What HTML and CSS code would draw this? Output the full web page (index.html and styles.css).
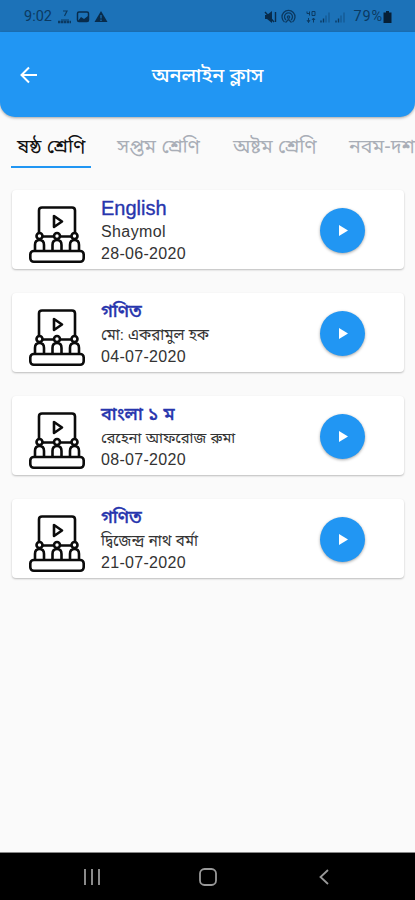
FILE: index.html
```html
<!DOCTYPE html>
<html lang="bn">
<head>
<meta charset="utf-8">
<title>অনলাইন ক্লাস</title>
<link rel="stylesheet" href="styles.css">
</head>
<body>
<svg width="0" height="0" class="defs">
  <symbol id="lesson" viewBox="0 0 56 58">
    <g fill="none" stroke="#0b0b0b" stroke-width="2.600" stroke-linejoin="round">
      <path d="M10 27V4.500q0-3 3-3H43q3 0 3 3V27M14 30.500h10M32 30.500h10"/>
      <path d="M25 10v11l8-5.500z"/>
      <circle cx="10.500" cy="30" r="3"/><circle cx="28" cy="30" r="3"/><circle cx="45.500" cy="30" r="3"/>
      <path d="M6 44v-5q0-5 4.500-5t4.500 5v5M23.500 44v-5q0-5 4.500-5t4.500 5v5M41 44v-5q0-5 4.500-5t4.500 5v5"/>
      <rect x="1.300" y="45" width="53.400" height="10.800" rx="3.500"/>
    </g>
  </symbol>
</svg>
<div class="screen">
  <div class="status">
    <span class="time">9:02</span>
    <svg class="left-icons" width="52" height="16" viewBox="0 0 52 16">
      <path d="M6 2h4l-2.500 5M4 11h8" fill="none" stroke="#0b3a62" stroke-width="1.200"/>
      <path d="M1 13h13" stroke="#0b3a62" stroke-width="2.500" stroke-dasharray="2.500 .5"/>
      <rect x="20.500" y="3" width="11" height="9.500" rx="1.500" fill="none" stroke="#082c4c" stroke-width="1.500"/>
      <path d="M21 12l3-4 3 2 4-3v5z" fill="#082c4c"/>
      <path d="M44 2l6.500 11h-13z" fill="#082c4c"/><path d="M44 6v3.500M44 10.500v1.500" stroke="#1c72b8" stroke-width="1.200"/>
    </svg>
    <svg class="right-icons" width="88" height="16" viewBox="0 0 88 16">
      <path d="M1 6h2l5-4v12L3 10H1z" fill="#082c4c"/><path d="M1 3l9 10M11.500 3v10" stroke="#082c4c" stroke-width="1.400"/>
      <g fill="none" stroke="#0b3a62" stroke-width="1.300"><path d="M20.500 13a6.500 6.500 0 1 1 8 0M22 11a4 4 0 1 1 5 0"/><circle cx="24.500" cy="8" r="1.200"/><path d="M21.500 13.500l3-3 3 3"/></g>
      <path d="M43 2.500v2h2.500M45.500 2.500v4M48 2.500h3v4h-3zM44.500 9v4.500M43 11l1.500 2.500L46 11M49.500 13.500V9M48 11l1.500-2 1.500 2" fill="none" stroke="#0b3a62" stroke-width="1"/>
      <g stroke="#0b3a62" stroke-width="1.400"><path d="M57 13.500v-2M59.500 13.500v-4M72 13.500v-2M74.500 13.500v-4"/><path opacity=".4" d="M62 13.500v-7M65 13.500v-10M77 13.500v-7M80 13.500v-10"/></g>
    </svg>
    <span class="percent">79%</span>
    <svg class="battery" width="9" height="13" viewBox="0 0 9 13"><path d="M3 0h3v1.500h2.500V12H.5V1.500H3z" fill="#061f36"/></svg>
  </div>
  <header class="appbar">
    <svg class="back" width="18" height="18" viewBox="0 0 18 18"><path d="M17 9H2M9 1.500L1.500 9 9 16.500" fill="none" stroke="#fff" stroke-width="2"/></svg>
    <h1>অনলাইন ক্লাস</h1>
  </header>
  <nav class="tabs">
    <span class="tab active">ষষ্ঠ শ্রেণি</span><span class="tab">সপ্তম শ্রেণি</span><span class="tab">অষ্টম শ্রেণি</span><span class="tab">নবম-দশম শ্রেণি</span>
  </nav>
  <main class="list">
    <article class="card"><svg class="lesson"><use href="#lesson"/></svg><div class="info"><h2 class="latin">English</h2><p class="latin">Shaymol</p><time>28-06-2020</time></div><div class="play"><svg width="9" height="11" viewBox="0 0 9 11"><path d="M0 0v11l9-5.500z" fill="#fff"/></svg></div></article>
    <article class="card"><svg class="lesson"><use href="#lesson"/></svg><div class="info"><h2>গণিত</h2><p>মো: একরামুল হক</p><time>04-07-2020</time></div><div class="play"><svg width="9" height="11" viewBox="0 0 9 11"><path d="M0 0v11l9-5.500z" fill="#fff"/></svg></div></article>
    <article class="card"><svg class="lesson"><use href="#lesson"/></svg><div class="info"><h2>বাংলা ১ ম</h2><p class="long">রেহেনা আফরোজ রুমা</p><time>08-07-2020</time></div><div class="play"><svg width="9" height="11" viewBox="0 0 9 11"><path d="M0 0v11l9-5.500z" fill="#fff"/></svg></div></article>
    <article class="card"><svg class="lesson"><use href="#lesson"/></svg><div class="info"><h2>গণিত</h2><p>দ্বিজেন্দ্র নাথ বর্মা</p><time>21-07-2020</time></div><div class="play"><svg width="9" height="11" viewBox="0 0 9 11"><path d="M0 0v11l9-5.500z" fill="#fff"/></svg></div></article>
  </main>
  <footer class="navbar">
    <svg width="16" height="16" viewBox="0 0 16 16"><path d="M1 0v16M8 0v16M15 0v16" stroke="#999" stroke-width="1.800"/></svg>
    <svg class="home" width="18" height="18" viewBox="0 0 18 18"><rect x="1" y="1" width="16" height="16" rx="4.500" fill="none" stroke="#999" stroke-width="1.800"/></svg>
    <svg width="10" height="16" viewBox="0 0 10 16"><path d="M9 1L1.500 8 9 15" fill="none" stroke="#999" stroke-width="1.800"/></svg>
  </footer>
</div>
</body>
</html>
```
FILE: styles.css
```css
* { box-sizing: border-box; margin: 0; padding: 0; }
body { font-family: "Liberation Sans", "Noto Sans Bengali", "Noto Sans", sans-serif; }
.defs { display: none; }
svg { display: block; flex: none; }
.screen { width: 415px; height: 900px; display: flex; flex-direction: column; background: #fafafa; overflow: hidden; }
.status { height: 32px; flex: none; background: #1c72b8; display: flex; align-items: center; padding: 2px 23px 0 24px; color: #0b3a62; font: 14.5px/18px Roboto, sans-serif; }
.left-icons { margin-left: 5px; }
.right-icons { margin-left: auto; }
.percent { margin-left: 1px; letter-spacing: .9px; }
.appbar { height: 85px; flex: none; background: #2196f3; border-radius: 0 0 15px 15px; display: grid; grid-template-columns: 60px 1fr 60px; align-items: center; box-shadow: 0 1px 3px rgba(0,0,0,.35); }
.back { margin-left: 20px; }
h1 { color: #fff; text-align: center; font-size: 19.8px; line-height: 30px; font-weight: 500; white-space: nowrap; }
.tabs { height: 51px; flex: none; display: flex; padding-left: 11px; white-space: nowrap; overflow: hidden; }
.tab { font-size: 19.5px; line-height: 30px; height: 51px; padding: 14px 0 0 6px; flex: none; width: 116px; color: #a9aeb7; }
.tab.active { width: 80px; color: #111; border-bottom: 2px solid #2196f3; margin-right: 20px; }
.list { flex: 1; padding: 22px 11px 0 12px; display: flex; flex-direction: column; gap: 24px; }
.card { height: 79px; background: #fff; border-radius: 4px; box-shadow: 0 1px 2px rgba(0,0,0,.25); display: flex; align-items: flex-start; }
.lesson { width: 56px; height: 58px; margin: 16px 0 0 17px; }
.info { margin: 6px 0 0 16px; flex: 1; white-space: nowrap; display: flex; flex-direction: column; }
h2 { font-size: 18px; line-height: 24px; height: 25px; font-weight: 500; color: #2735ad; -webkit-text-stroke: .35px #2735ad; }
h2.latin { font-size: 20px; }
.info p { font-size: 15.1px; line-height: 22px; height: 22px; color: #333; }
.info p.latin { font-size: 16px; letter-spacing: .4px; }
.info p.long { font-size: 14.9px; }
.info time { font-size: 16px; line-height: 22px; color: #333; letter-spacing: .3px; }
.play { width: 45px; height: 45px; margin: 18px 39px 0 0; border-radius: 50%; background: #2196f3; box-shadow: 0 1px 3px rgba(0,0,0,.35); display: flex; align-items: center; justify-content: center; padding-left: 1px; }
.navbar { height: 48px; flex: none; background: #000; border-top: 1px solid #888; display: flex; align-items: center; justify-content: space-between; padding: 0 86px 0 84px; }
.home { margin-right: 4px; }
```
